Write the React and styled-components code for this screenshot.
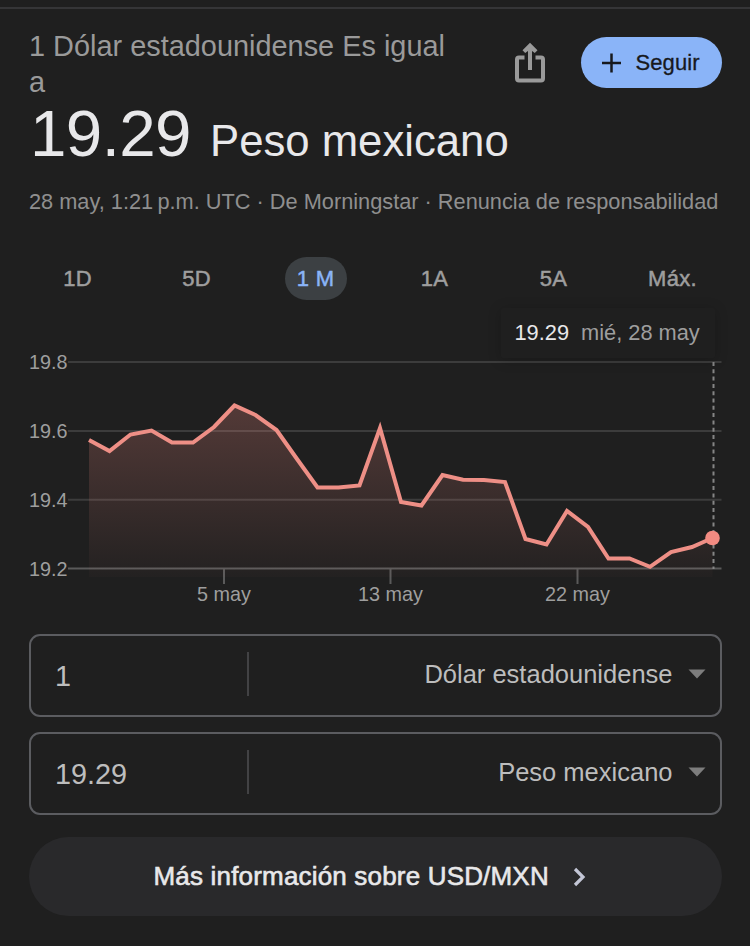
import React from 'react';
import styled, { createGlobalStyle } from 'styled-components';

const GlobalStyle = createGlobalStyle`
  * {
    box-sizing: border-box;
  }
  body {
    margin: 0;
    background-color: #1f1f1f;
    font-family: "Liberation Sans", Arial, sans-serif;
  }
`;

const Page = styled.main`
  width: 750px;
  height: 946px;
  padding: 0 28.5px 0 29px;
  overflow: hidden;
  display: flex;
  flex-direction: column;
  background-color: #1f1f1f;
`;

const TopRule = styled.div`
  flex: none;
  height: 2px;
  margin: 7px -28.5px 0 -29px;
  background-color: #353537;
`;

const Header = styled.header`
  display: flex;
  height: 92px;
  padding-top: 19px;
`;

const Base = styled.h2`
  width: 440px;
  margin: 0;
  color: #9a9a9a;
  font-size: 28.9px;
  font-weight: 400;
  line-height: 36px;
`;

const ShareButton = styled.button`
  width: 32px;
  height: 42px;
  margin: 14px 0 0 44.5px;
  padding: 0;
  border: none;
  background: none;
  color: #9a9a9a;
`;

const FollowButton = styled.button`
  display: flex;
  align-items: center;
  gap: 14px;
  width: 141px;
  height: 51px;
  margin: 9px 0 0 auto;
  padding: 0 0 0 20px;
  border: none;
  border-radius: 26px;
  background-color: #8ab4f8;
  color: #17191d;
  font-family: inherit;
  font-size: 22px;
  letter-spacing: 0.1px;
  -webkit-text-stroke: 0.3px #17191d;
`;

const Quote = styled.div`
  display: flex;
  align-items: baseline;
  height: 80px;
  color: #e8e8ea;
  white-space: nowrap;
`;

const Amount = styled.span`
  width: 181px;
  padding-left: 1px;
  font-size: 65.5px;
  letter-spacing: -0.6px;
  line-height: 66px;
`;

const Currency = styled.span`
  font-size: 43.7px;
`;

const Meta = styled.p`
  margin: 8px 0 0;
  color: #8f8f8f;
  font-size: 21.75px;
  line-height: 26px;
  white-space: nowrap;
`;

const Tabs = styled.nav`
  display: grid;
  grid-template-columns: repeat(6, 119px);
  justify-items: center;
  margin: 42px -12px 0 -11px;
`;

const Tab = styled.button`
  min-width: 62px;
  height: 43px;
  padding: 0;
  border: none;
  border-radius: 22px;
  background-color: ${props => (props.$active ? '#3c4043' : 'transparent')};
  color: ${props => (props.$active ? '#8ab4f8' : '#9e9e9e')};
  font-family: inherit;
  font-size: 22px;
  letter-spacing: 0.3px;
  -webkit-text-stroke: 0.5px currentColor;
`;

const ChartArea = styled.section`
  position: relative;
  height: 334px;
`;

const Plot = styled.svg`
  display: block;
  margin-left: -29px;
`;

const AxisLabel = styled.text`
  fill: #9e9e9e;
  font-size: 19.8px;
`;

const Tooltip = styled.div`
  position: absolute;
  top: 8px;
  right: 7px;
  display: flex;
  align-items: center;
  gap: 12px;
  width: 214px;
  height: 50px;
  padding-left: 14px;
  border-radius: 2px;
  background-color: #1f1f1f;
  box-shadow: 0 2px 14px rgba(0, 0, 0, 0.2);
  color: #9e9e9e;
  font-size: 21.8px;
  white-space: nowrap;
`;

const TooltipValue = styled.span`
  color: #e8e8ea;
`;

const Converter = styled.section`
  display: flex;
  flex-direction: column;
  gap: 15px;
`;

const Field = styled.div`
  display: flex;
  align-items: center;
  height: 83px;
  padding: 0 14px 0 24px;
  border: 2px solid #5b5c60;
  border-radius: 11px;
  color: #bdbdbd;
`;

const FieldValue = styled.span`
  width: 194px;
  height: 44px;
  margin-top: -3px;
  border-right: 2px solid #424244;
  font-size: 28.8px;
  line-height: 49px;
`;

const FieldCurrency = styled.span`
  margin: -3px 15px 0 auto;
  font-size: 25.5px;
`;

const Caret = styled.svg`
  margin-top: -3px;
  fill: #7d7d7d;
`;

const MoreButton = styled.button`
  display: flex;
  align-items: center;
  gap: 24px;
  height: 79px;
  margin-top: 22px;
  padding: 0 0 0 124.5px;
  border: none;
  border-radius: 40px;
  background-color: #29292b;
  color: #e8e8ea;
  font-family: inherit;
  font-size: 26px;
  letter-spacing: 0.18px;
  -webkit-text-stroke: 0.6px #e8e8ea;
`;

const ranges = ['1D', '5D', '1 M', '1A', '5A', 'Máx.'];

const points = [
  [89, 440], [109.5, 451], [130.5, 434.5], [151.5, 430.5], [172, 442.5],
  [193, 442.5], [214, 427], [234.5, 405.5], [255.5, 415], [276.5, 430],
  [297, 459], [317.5, 487.5], [338.5, 487.5], [359.5, 485.5], [380, 428],
  [401, 502], [421.5, 505.5], [442.5, 475], [463, 479.8], [484, 480],
  [505, 482], [525.5, 539], [546.5, 544.5], [567, 511], [588, 527],
  [608.5, 558.5], [629.5, 558.5], [650, 566.8], [671, 552], [692, 547],
  [712.5, 538],
];

const yTicks = [['19.8', 362], ['19.6', 431], ['19.4', 499.7], ['19.2', 568.5]];
const xTicks = [['5 may', 224], ['13 may', 390.5], ['22 may', 577.5]];

const line = points.map(point => point.join(',')).join(' ');

const Chart = () => (
  <Plot width="750" height="320" viewBox="0 300 750 320">
    <defs>
      <linearGradient id="fade" gradientUnits="userSpaceOnUse" x1="0" y1="405" x2="0" y2="577">
        <stop offset="0" stopColor="#f28b82" stopOpacity="0.25" />
        <stop offset="1" stopColor="#f28b82" stopOpacity="0.02" />
      </linearGradient>
    </defs>
    {yTicks.map(([label, y]) => (
      <g key={label}>
        <AxisLabel x="29" y={y + 7}>{label}</AxisLabel>
        <path d={`M68 ${y}H721.5`} stroke={label === '19.2' ? '#5a5a5a' : '#3c3c3c'} strokeWidth="2" />
      </g>
    ))}
    {xTicks.map(([label, x]) => (
      <g key={label}>
        <path d={`M${x} 569v15`} stroke="#5a5a5a" strokeWidth="2" />
        <AxisLabel x={x} y="601" textAnchor="middle">{label}</AxisLabel>
      </g>
    ))}
    <polygon points={`${line} 712.5,577 89,577`} fill="url(#fade)" />
    <path d="M713.5 362V569" stroke="#858585" strokeWidth="2" strokeDasharray="4 3.3" />
    <polyline points={line} fill="none" stroke="#ee8f86" strokeWidth="4" />
    <circle cx="712.5" cy="538" r="7.3" fill="#f28b82" />
  </Plot>
);

const CurrencyField = props => (
  <Field>
    <FieldValue>{props.value}</FieldValue>
    <FieldCurrency>{props.currency}</FieldCurrency>
    <Caret width="18" height="10" viewBox="0 0 18 10">
      <path d="M.5 .5h17L9 9.500z" />
    </Caret>
  </Field>
);

export default () => {
  return (
    <Page>
      <GlobalStyle />
      <TopRule />
      <Header>
        <Base>1 Dólar estadounidense Es igual a</Base>
        <ShareButton aria-label="Compartir">
          <svg width="32" height="42" viewBox="0 0 32 42">
            <path
              d="M10.5 15.5H5Q3 15.5 3 17.5V36.5Q3 38.5 5 38.5H27Q29 38.5 29 36.5V17.5Q29 15.500 27 15.5H21.5"
              fill="none"
              stroke="currentColor"
              strokeWidth="4"
            />
            <path d="M16 28V5" stroke="currentColor" strokeWidth="4" />
            <path d="M16 .8L23.5 8.3L20.8 11L16 7.5L11.2 11L8.5 8.3Z" fill="currentColor" />
          </svg>
        </ShareButton>
        <FollowButton>
          <svg width="21" height="20" viewBox="0 0 21 20">
            <path d="M10.5 .5v19M1 10h19" stroke="currentColor" strokeWidth="2.5" />
          </svg>
          Seguir
        </FollowButton>
      </Header>
      <Quote>
        <Amount>19.29</Amount>
        <Currency>Peso mexicano</Currency>
      </Quote>
      <Meta>28 may, 1:21&#8201;p.m. UTC · De Morningstar · Renuncia de responsabilidad</Meta>
      <Tabs>
        {ranges.map(range => (
          <Tab key={range} $active={range === '1 M'}>
            {range}
          </Tab>
        ))}
      </Tabs>
      <ChartArea>
        <Chart />
        <Tooltip>
          <TooltipValue>19.29</TooltipValue>
          <span>mié, 28 may</span>
        </Tooltip>
      </ChartArea>
      <Converter>
        <CurrencyField value="1" currency="Dólar estadounidense" />
        <CurrencyField value="19.29" currency="Peso mexicano" />
      </Converter>
      <MoreButton>
        Más información sobre USD/MXN
        <svg width="13" height="20" viewBox="0 0 13 20">
          <path d="M2 2L10 10L2 18" fill="none" stroke="#c3c6d6" strokeWidth="3.2" />
        </svg>
      </MoreButton>
    </Page>
  );
};
